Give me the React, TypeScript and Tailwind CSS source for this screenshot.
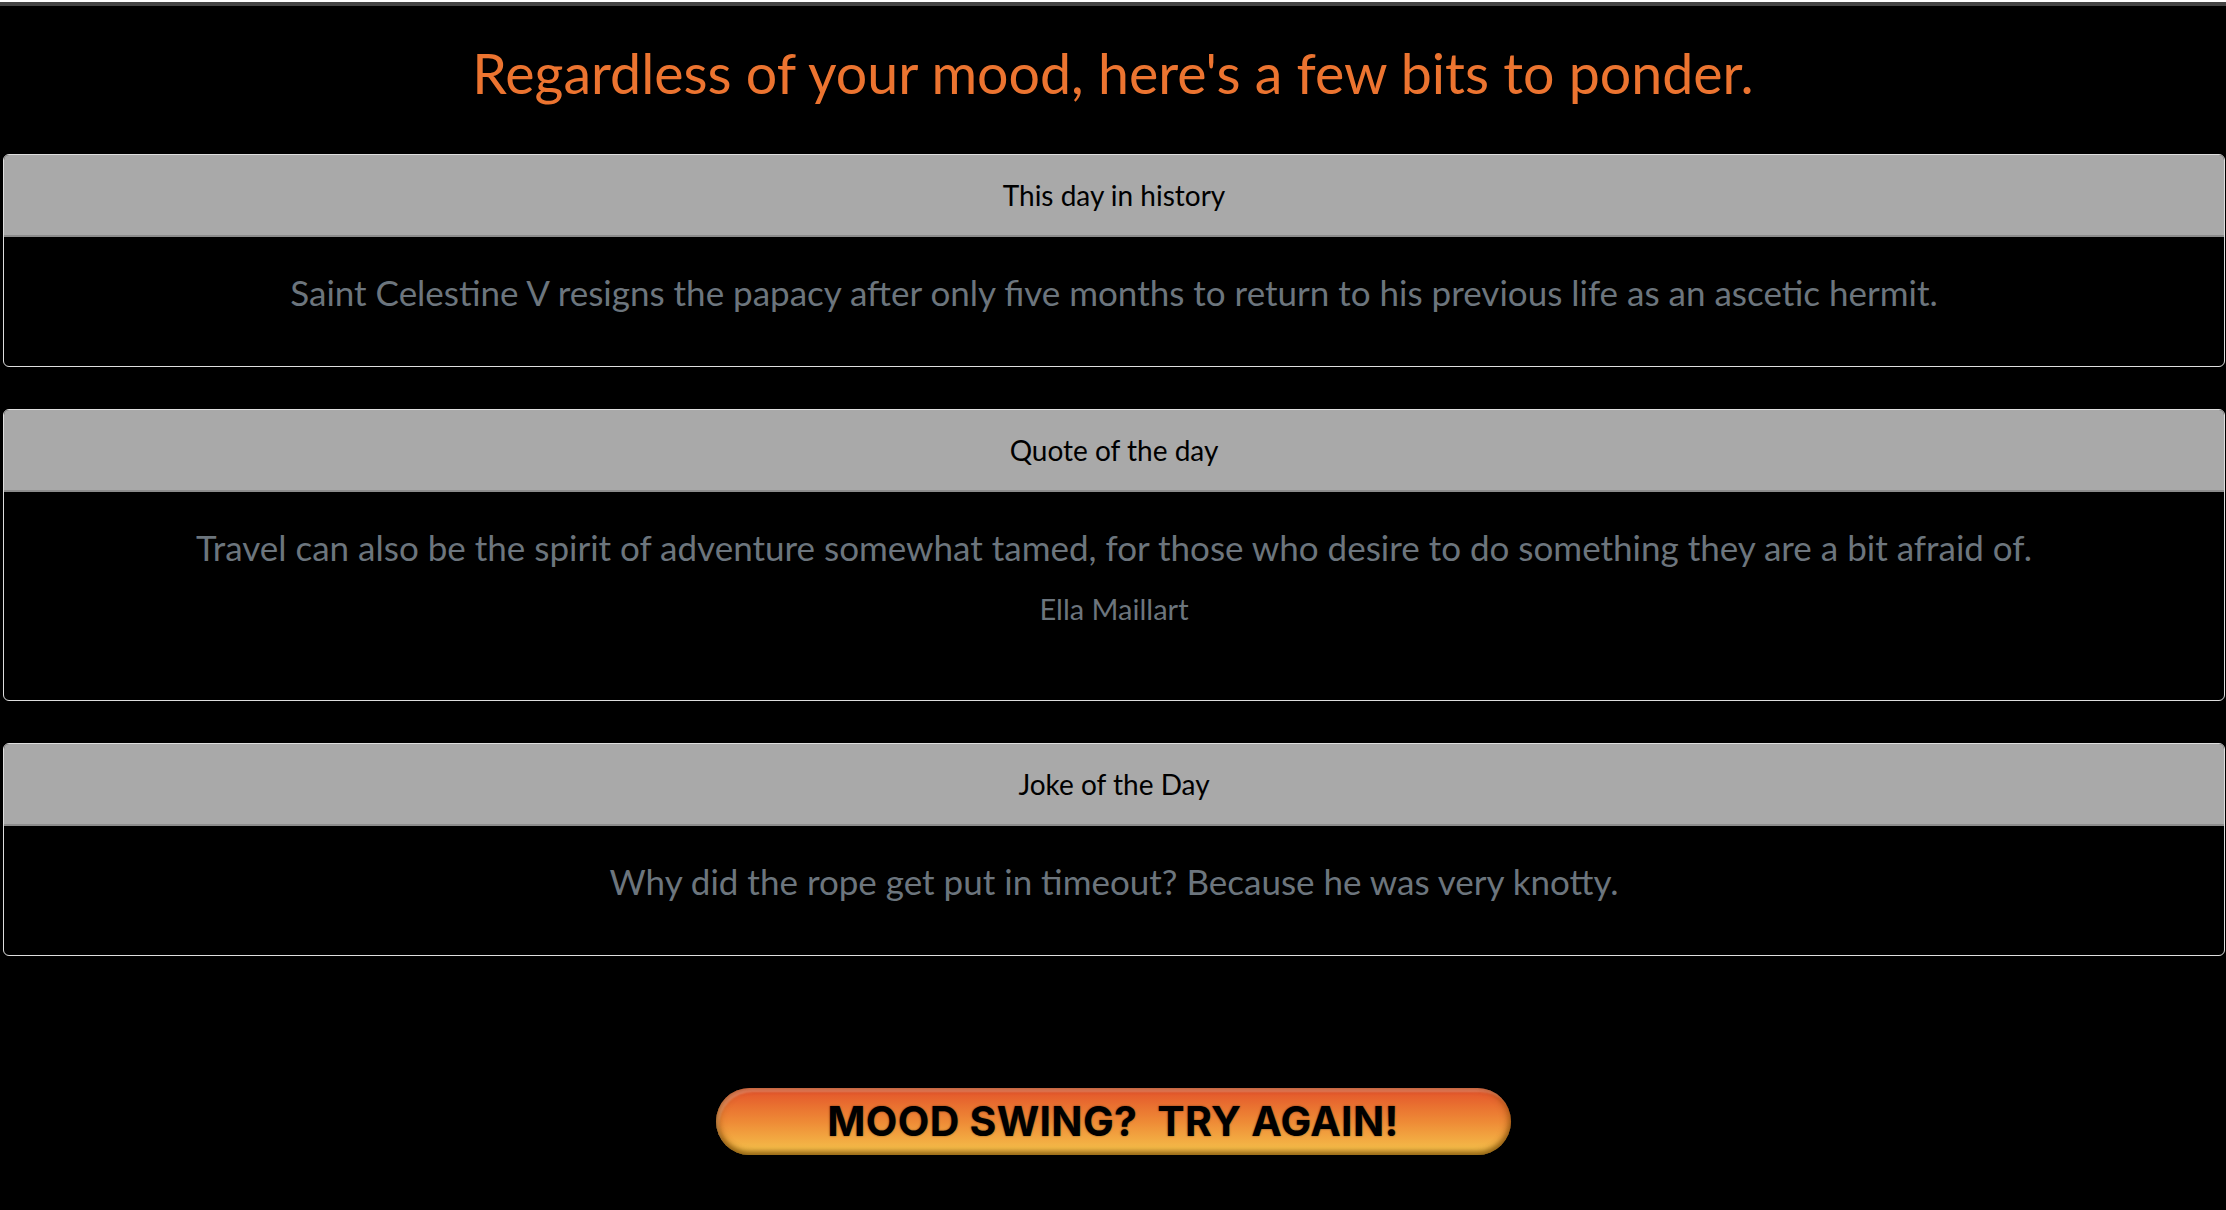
import React from "react";

type Bit = {
  title: string;
  text: string;
  author?: string;
};

const bits: Bit[] = [
  {
    title: "This day in history",
    text: "Saint Celestine V resigns the papacy after only five months to return to his previous life as an ascetic hermit.",
  },
  {
    title: "Quote of the day",
    text: "Travel can also be the spirit of adventure somewhat tamed, for those who desire to do something they are a bit afraid of.",
    author: "Ella Maillart",
  },
  {
    title: "Joke of the Day",
    text: "Why did the rope get put in timeout? Because he was very knotty.",
  },
];

function BitCard({ bit }: { bit: Bit }) {
  return (
    <section className="ml-[3px] mr-[1px] rounded-[6px] border border-[#dedede] overflow-hidden">
      <header className="h-[82px] flex items-center justify-center bg-[#a9a9a9] border-b-2 border-[#8c8c8c] text-black text-[28px]">
        {bit.title}
      </header>
      <div
        className={`px-6 pt-[31px] text-center text-[#6c757d] ${
          bit.author ? "pb-[73px]" : "pb-[50px]"
        }`}
      >
        <p className="text-[35px] leading-[48px]">{bit.text}</p>
        {bit.author && (
          <p className="mt-[20px] text-[29px] leading-[36px]">{bit.author}</p>
        )}
      </div>
    </section>
  );
}

export default function App() {
  return (
    <main className="min-h-screen bg-black font-['Lato','Open_Sans',sans-serif] pb-[46px]">
      <div className="h-[4px] mt-[2px] bg-[#454545]" />
      <h1 className="mt-[36px] text-center text-[55.5px] leading-[62px] text-[#ec7430]">
        Regardless of your mood, here's a few bits to ponder.
      </h1>

      <div className="mt-[50px] flex flex-col gap-[42px]">
        {bits.map((b) => (
          <BitCard key={b.title} bit={b} />
        ))}
      </div>

      <div className="mt-[132px] flex justify-center">
        <button
          type="button"
          className="w-[795px] h-[67px] rounded-full bg-gradient-to-b from-[#e2502a] via-[#ee8a36] to-[#f4c44c] shadow-[inset_0_-4px_5px_rgba(110,70,0,0.55),inset_4px_0_6px_rgba(120,60,0,0.35),inset_-4px_0_6px_rgba(120,60,0,0.35),inset_3px_4px_2px_rgba(255,255,255,0.25)] font-['Inter',sans-serif] font-bold text-[41px] leading-none text-black tracking-[0.3px] [text-shadow:0_0_2px_rgba(0,0,0,0.5)] whitespace-pre"
        >
          {"MOOD SWING?  TRY AGAIN!"}
        </button>
      </div>
    </main>
  );
}
